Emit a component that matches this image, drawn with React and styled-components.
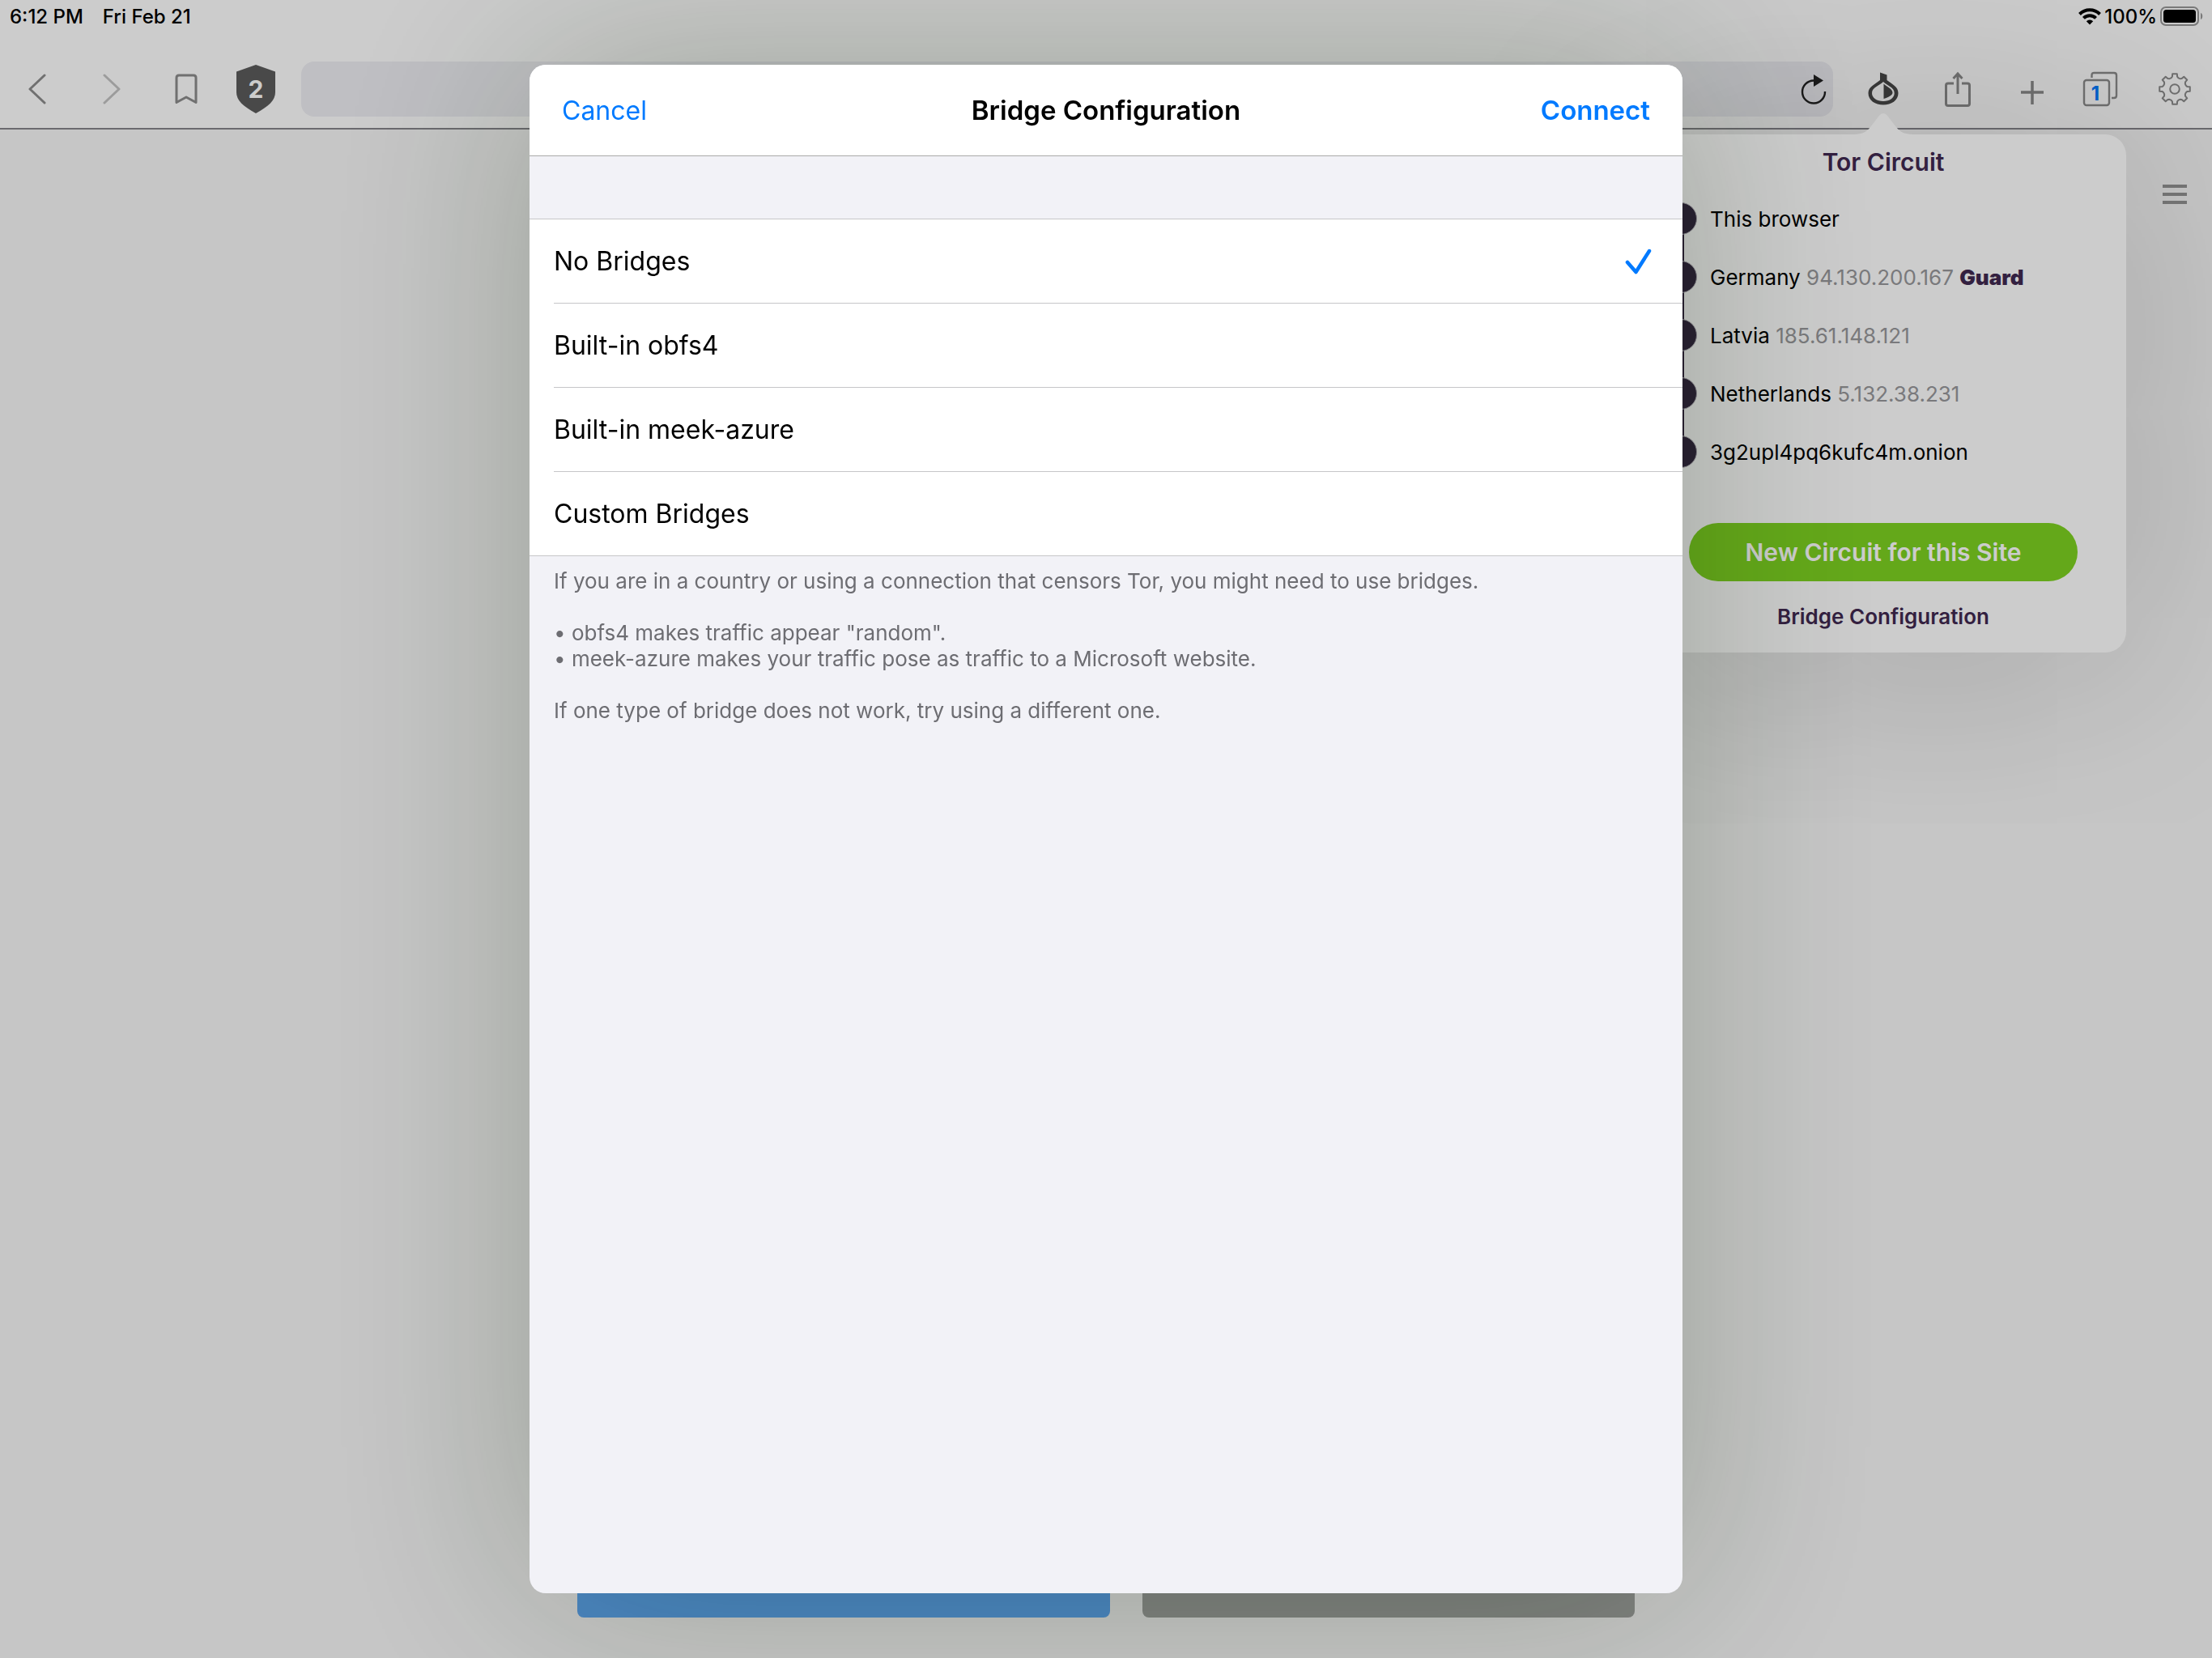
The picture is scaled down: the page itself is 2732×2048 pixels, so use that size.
import React, { useState } from "react";
import styled, { createGlobalStyle } from "styled-components";

const GlobalStyle = createGlobalStyle`
  *, *::before, *::after { box-sizing: border-box; }
  body { margin: 0; background: #f8f8f8; }
  body, button, input { font-family: Inter, "Liberation Sans", sans-serif; }
  button { padding: 0; border: 0; background: none; color: inherit; cursor: pointer; }
  ul, h1, h2, p { margin: 0; padding: 0; }
  ul { list-style: none; }
  svg { display: block; flex: none; }
`;

const Page = styled.div`
  display: flex;
  flex-direction: column;
  min-height: 100vh;
  overflow-x: clip;
`;

const Header = styled.header`
  background: #fff;
  border-bottom: 2px solid #86858b;
`;

const StatusBar = styled.div`
  display: flex;
  align-items: center;
  gap: 24px;
  height: 40px;
  padding: 0 10px 0 12px;
  font-size: 24px;
  font-weight: 500;
  color: #000;
`;

const StatusRight = styled.div`
  display: flex;
  align-items: center;
  gap: 4px;
  margin-left: auto;
`;

const Toolbar = styled.div`
  display: flex;
  align-items: center;
  gap: 32px;
  padding: 36px 16px 14px;
`;

const ToolButton = styled.button`
  display: grid;
  place-items: center;
  flex: none;
  width: ${(p) => p.$width || 60}px;
  height: 60px;
  color: ${(p) => p.$color || "#8c8c8c"};

  > * { grid-area: 1 / 1; }
`;

const ShieldCount = styled.span`
  font-size: 30px;
  font-weight: 700;
  color: #fff;
`;

const TabCount = styled.span`
  justify-self: start;
  width: 32px;
  padding-top: 10px;
  font-size: 24px;
  font-weight: 700;
  text-align: center;
  color: #007aff;
`;

const AddressBar = styled.form`
  display: flex;
  flex: 1;
  align-items: center;
  height: 68px;
  border-radius: 16px;
  background: #efeff4;
`;

const AddressInput = styled.input`
  flex: 1;
  min-width: 0;
  height: 100%;
  padding: 0 20px;
  border: 0;
  outline: 0;
  background: none;
  font-size: 30px;
`;

const PopoverAnchor = styled.div`
  position: relative;
  flex: none;
`;

const Popover = styled.section`
  position: absolute;
  top: calc(100% + 26px);
  left: 50%;
  width: 600px;
  margin-left: -300px;
  padding: 14px 0 26px;
  border-radius: 26px;
  background: #fff;
  box-shadow: 0 10px 260px rgba(0, 0, 0, 0.22);
  text-align: center;
`;

const PopoverArrow = styled.svg`
  position: absolute;
  bottom: 100%;
  left: 50%;
  margin-left: -36px;
`;

const PopoverTitle = styled.h2`
  font-size: 30px;
  font-weight: 600;
  line-height: 40px;
  color: #402850;
`;

const Circuit = styled.ul`
  margin-top: 14px;
  padding-left: 30px;
  text-align: left;
`;

const Hop = styled.li`
  display: flex;
  align-items: center;
  gap: 16px;
  height: 72px;
  font-size: 26px;
  background: linear-gradient(#332640, #332640) 16px 0 / 8px 100% no-repeat;

  &:first-child { background-position: 16px 100%; background-size: 8px 50%; }
  &:last-child { background-size: 8px 50%; }
`;

const Node = styled.span`
  width: 40px;
  height: 40px;
  border: 1px solid #b5afbb;
  border-radius: 50%;
  background: #332640;
`;

const Address = styled.span`
  color: #98989b;
`;

const Guard = styled.b`
  font-weight: 900;
  color: #402850;
`;

const NewCircuit = styled.button`
  display: block;
  width: 480px;
  height: 72px;
  margin: 52px auto 26px;
  border-radius: 36px;
  background: #7ed321;
  color: #fff;
  font-size: 30px;
  font-weight: 600;
`;

const BridgeLink = styled.button`
  font-size: 26px;
  font-weight: 600;
  line-height: 36px;
  color: #402850;
`;

const Content = styled.main`
  display: flex;
  flex: 1;
  flex-direction: column;
  justify-content: space-between;
  padding: 50px 16px;
`;

const MenuButton = styled.button`
  display: grid;
  place-items: center;
  align-self: flex-end;
  width: 60px;
  height: 60px;
`;

const Actions = styled.div`
  display: flex;
  justify-content: center;
  gap: 40px;
`;

const Action = styled.button`
  width: ${(p) => p.$width}px;
  height: 88px;
  border-radius: 8px;
  background: ${(p) => p.$color};
`;

const Backdrop = styled.div`
  position: fixed;
  inset: 0;
  display: flex;
  justify-content: center;
  padding: 80px 0;
  background: rgba(0, 0, 0, 0.2);
`;

const Dialog = styled.form`
  width: 100%;
  max-width: 1424px;
  overflow: hidden auto;
  border-radius: 20px;
  background: #f2f2f7;
  box-shadow: 0 0 280px rgba(15, 40, 5, 0.25);
`;

const DialogBar = styled.header`
  display: grid;
  grid-template-columns: 1fr auto 1fr;
  align-items: center;
  height: 113px;
  padding: 0 40px;
  border-bottom: 1px solid #a9a9a9;
  background: #fff;
`;

const DialogTitle = styled.h1`
  font-size: 33px;
  font-weight: 600;
`;

const BarButton = styled.button`
  justify-self: ${(p) => (p.$end ? "end" : "start")};
  font-size: ${(p) => (p.$end ? 33 : 32)}px;
  font-weight: ${(p) => (p.$end ? 600 : 400)};
  color: #007aff;
`;

const Options = styled.div`
  margin-top: 77px;
  padding-left: 30px;
  border: solid #c6c6c8;
  border-width: 1px 0;
  background: #fff;
`;

const Option = styled.label`
  display: flex;
  align-items: center;
  justify-content: space-between;
  height: 103px;
  padding-right: 38px;
  font-size: 32px;
  cursor: pointer;

  & + & { height: 104px; border-top: 1px solid #c6c6c8; }
`;

const Radio = styled.input`
  appearance: none;
  order: 1;
  width: 0;
  height: 0;
  margin: 0;
`;

const Check = styled.svg`
  order: 2;
  visibility: hidden;

  ${Radio}:checked ~ & { visibility: visible; }
`;

const OptionName = styled.span`
  flex: 1;
`;

const Notes = styled.div`
  display: grid;
  gap: 32px;
  padding: 15px 30px;
  font-size: 26px;
  line-height: 32px;
  color: #6d6d72;
`;

const hops = [
  { name: "This browser" },
  { name: "Germany", address: "94.130.200.167", guard: true },
  { name: "Latvia", address: "185.61.148.121" },
  { name: "Netherlands", address: "5.132.38.231" },
  { name: "3g2upl4pq6kufc4m.onion" },
];

const bridges = ["No Bridges", "Built-in obfs4", "Built-in meek-azure", "Custom Bridges"];

const toothProfile = [[-0.32, 14.4], [-0.2, 15.6], [-0.15, 19], [0.15, 19], [0.2, 15.6], [0.32, 14.4]];

const gearPath = (() => {
  const teeth = 8;
  const points = [];
  for (let i = 0; i < teeth; i++) {
    const a = (i * 2 * Math.PI) / teeth - Math.PI / 2;
    toothProfile.forEach(([d, r]) => {
      points.push(`${(20 + r * Math.cos(a + d)).toFixed(2)} ${(20 + r * Math.sin(a + d)).toFixed(2)}`);
    });
  }
  return `M${points.join("L")}Z`;
})();

function Chevron({ flip }) {
  return (
    <svg width="22" height="38" fill="none" stroke="currentColor" strokeWidth="3" strokeLinecap="round" strokeLinejoin="round">
      <path d={flip ? "M2 2L20 19L2 36" : "M20 2L2 19L20 36"} />
    </svg>
  );
}

export default function App() {
  const [bridge, setBridge] = useState("No Bridges");

  return (
    <Page>
      <GlobalStyle />
      <Header>
        <StatusBar>
          <span>6:12 PM</span>
          <span>Fri Feb 21</span>
          <StatusRight>
            <svg width="28" height="22" viewBox="0 0 28 22" fill="none" stroke="#000" strokeWidth="4">
              <path d="M1.5 8.5a17.7 17.7 0 0 1 25 0" />
              <path d="M6.4 13.4a10.8 10.8 0 0 1 15.2 0" />
              <path d="M14 21.5l-4.2-4.2a6 6 0 0 1 8.4 0z" fill="#000" stroke="none" />
            </svg>
            <span>100%</span>
            <svg width="54" height="24" viewBox="0 0 54 24">
              <rect x="1" y="1" width="46" height="22" rx="6" fill="none" stroke="#999" strokeWidth="2" />
              <rect x="4" y="4" width="40" height="16" rx="3.5" fill="#000" />
              <path d="M50 8c3 1 3 7 0 8z" fill="#999" />
            </svg>
          </StatusRight>
        </StatusBar>
        <Toolbar>
          <ToolButton aria-label="Back"><Chevron /></ToolButton>
          <ToolButton aria-label="Forward" $color="#c4c4c4"><Chevron flip /></ToolButton>
          <ToolButton aria-label="Bookmarks">
            <svg width="28" height="38" fill="none" stroke="currentColor" strokeWidth="3" strokeLinejoin="round">
              <path d="M2 35.5V5q0-3 3-3h18q3 0 3 3v30.500L14 29Z" />
            </svg>
          </ToolButton>
          <ToolButton aria-label="Security level" $width={48}>
            <svg width="48" height="60" fill="#5c5c5c">
              <path d="M24 0L48 8.500V34C48 44 40 51 24 60C8 51 0 44 0 34V8.500Z" />
            </svg>
            <ShieldCount>2</ShieldCount>
          </ToolButton>
          <AddressBar onSubmit={(e) => e.preventDefault()}>
            <AddressInput type="text" aria-label="Address" />
            <ToolButton type="button" aria-label="Reload" $width={48} $color="#222">
              <svg width="32" height="38" fill="none" stroke="currentColor" strokeWidth="2.400">
                <path d="M16 8.500A14 14 0 1 0 30 22" />
                <path d="M16 1L28 8.500L16 16Z" fill="currentColor" stroke="none" />
              </svg>
            </ToolButton>
          </AddressBar>
          <PopoverAnchor>
            <ToolButton aria-label="Tor circuit" $color="#484848">
              <svg width="38" height="42" viewBox="0 0 38 42">
                <path d="M15 .5L23.500 3.500V10C30 15 37.500 18 37.500 26C37.500 35 29 40.500 19 40.500S.5 35 .5 26C.5 18 9 15 15 10Z" fill="currentColor" />
                <path d="M19 12C24 17 32.700 19 32.700 26C32.700 32 27 36 19 36S5 32 5 26C5 19 14 17 19 12Z" fill="#fff" />
                <path d="M19.500 14.500C23 18 30.500 20.500 30.500 25.500C30.500 29 24 31.500 19.500 33Z" fill="currentColor" />
              </svg>
            </ToolButton>
            <Popover aria-label="Tor Circuit">
              <PopoverArrow width="72" height="27" fill="#fff">
                <path d="M0 27C10 26.500 14 25 20 18L30 5Q36-3 42 5L52 18C58 25 62 26.500 72 27Z" />
              </PopoverArrow>
              <PopoverTitle>Tor Circuit</PopoverTitle>
              <Circuit>
                {hops.map((hop) => (
                  <Hop key={hop.name}>
                    <Node />
                    <span>
                      {hop.name}
                      {hop.address && <> <Address>{hop.address}</Address></>}
                      {hop.guard && <> <Guard>Guard</Guard></>}
                    </span>
                  </Hop>
                ))}
              </Circuit>
              <NewCircuit>New Circuit for this Site</NewCircuit>
              <BridgeLink>Bridge Configuration</BridgeLink>
            </Popover>
          </PopoverAnchor>
          <ToolButton aria-label="Share">
            <svg width="32" height="44" fill="none" stroke="currentColor" strokeWidth="3">
              <path d="M11 15H4Q1.500 15 1.500 17.500V40Q1.500 42.500 4 42.500H28Q30.500 42.500 30.500 40V17.500Q30.500 15 28 15H21" />
              <path d="M16 28V3M10.500 9L16 3L21.500 9" />
            </svg>
          </ToolButton>
          <ToolButton aria-label="New tab">
            <svg width="30" height="38" fill="none" stroke="currentColor" strokeWidth="3.500">
              <path d="M1 23H29M15 9V38" />
            </svg>
          </ToolButton>
          <ToolButton aria-label="Tabs" $width={52}>
            <svg width="52" height="44" fill="none" stroke="currentColor" strokeWidth="2.400">
              <rect x="2" y="11" width="31" height="31" rx="3" />
              <path d="M11.500 8V5Q11.500 2 14.500 2H39Q42 2 42 5V30Q42 33 39 33H36" />
            </svg>
            <TabCount>1</TabCount>
          </ToolButton>
          <ToolButton aria-label="Settings">
            <svg width="40" height="40" fill="none" stroke="currentColor" strokeWidth="2" strokeLinejoin="round">
              <path d={gearPath} />
              <circle cx="20" cy="20" r="5.800" />
            </svg>
          </ToolButton>
        </Toolbar>
      </Header>

      <Content>
        <MenuButton aria-label="Menu">
          <svg width="30" height="24" fill="#959595">
            <path d="M0 0H30V4H0ZM0 10H30V14H0ZM0 20H30V24H0Z" />
          </svg>
        </MenuButton>
        <Actions>
          <Action $width={658} $color="#5ea8f4" aria-label="Primary action" />
          <Action $width={608} $color="#a0a2a0" aria-label="Secondary action" />
        </Actions>
      </Content>

      <Backdrop>
        <Dialog role="dialog" aria-label="Bridge Configuration" onSubmit={(e) => e.preventDefault()}>
          <DialogBar>
            <BarButton type="button">Cancel</BarButton>
            <DialogTitle>Bridge Configuration</DialogTitle>
            <BarButton type="submit" $end>Connect</BarButton>
          </DialogBar>
          <Options role="radiogroup" aria-label="Bridges">
            {bridges.map((name) => (
              <Option key={name}>
                <Radio type="radio" name="bridge" checked={bridge === name} onChange={() => setBridge(name)} />
                <OptionName>{name}</OptionName>
                <Check width="34" height="34" fill="none" stroke="#007aff" strokeWidth="4.500" strokeLinecap="round" strokeLinejoin="round">
                  <path d="M4 18L14.500 30L31 4" />
                </Check>
              </Option>
            ))}
          </Options>
          <Notes>
            <p>If you are in a country or using a connection that censors Tor, you might need to use bridges.</p>
            <p>
              • obfs4 makes traffic appear "random".
              <br />
              • meek-azure makes your traffic pose as traffic to a Microsoft website.
            </p>
            <p>If one type of bridge does not work, try using a different one.</p>
          </Notes>
        </Dialog>
      </Backdrop>
    </Page>
  );
}
